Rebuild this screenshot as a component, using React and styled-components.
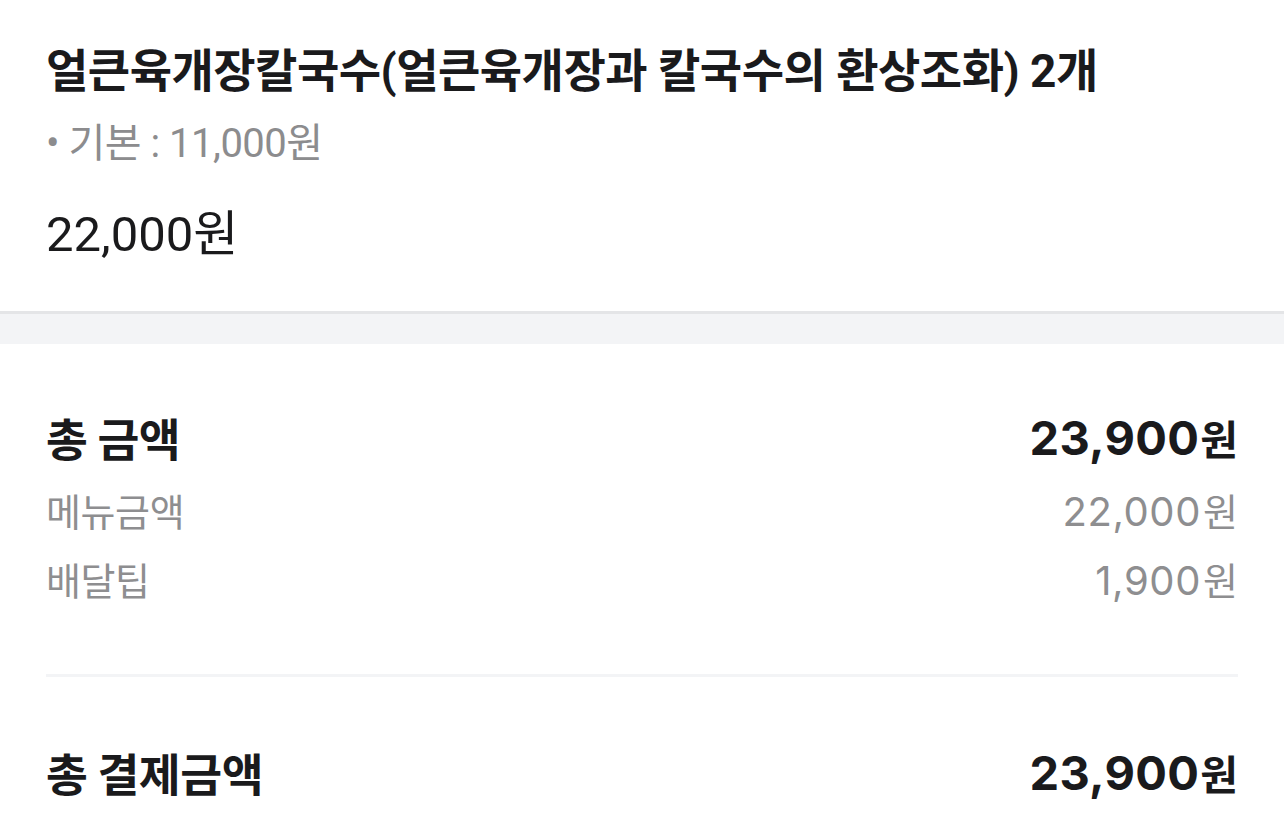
import React from "react";
import styled, { createGlobalStyle } from "styled-components";

const Global = createGlobalStyle`
  html, body { margin: 0; padding: 0; background: #fff; }
  body { font-family: "Noto Sans CJK KR", "Noto Sans", sans-serif; color: #1a1a1c; }
`;

const Page = styled.div`
  width: 1284px;
  min-height: 831px;
  background: #fff;
  overflow: hidden;
`;

const MenuSection = styled.section`
  padding: 40px 46px 0;
  height: 311px;
  box-sizing: border-box;
  display: flex;
  flex-direction: column;
`;

const MenuTitle = styled.h1`
  margin: 0;
  font-family: Roboto, "Noto Sans CJK KR", sans-serif;
  font-weight: 700;
  font-size: 46px;
  line-height: 62px;
  letter-spacing: -0.5px;
  color: #1a1a1c;
  white-space: nowrap;
`;

const OptionLine = styled.div`
  margin-top: 17px;
  font-family: Roboto, "Noto Sans CJK KR", sans-serif;
  font-size: 40px;
  line-height: 50px;
  letter-spacing: -0.5px;
  color: #8c8c8e;
`;

const MenuPrice = styled.div`
  margin-top: 36px;
  font-family: Roboto, "Noto Sans CJK KR", sans-serif;
  font-size: 49px;
  line-height: 60px;
  color: #1a1a1c;
`;

const Gap = styled.div`
  height: 30px;
  background: #f3f4f6;
  border-top: 3px solid #e4e5e7;
`;

const Summary = styled.section`
  padding: 55px 46px 0;
  display: flex;
  flex-direction: column;
`;

const Row = styled.div`
  display: flex;
  justify-content: space-between;
  align-items: center;
  height: ${(p) => (p.$strong ? "76px" : "69px")};
  color: ${(p) => (p.$strong ? "#1a1a1c" : "#8e8e90")};
  font-weight: ${(p) => (p.$strong ? 700 : 400)};
`;

const Label = styled.span`
  font-family: "Noto Sans CJK KR", sans-serif;
  font-size: ${(p) => (p.$strong ? "45.5px" : "38px")};
  letter-spacing: ${(p) => (p.$strong ? "-0.4px" : "-0.4px")};
`;

const Amount = styled.span`
  font-family: Inter, "Noto Sans CJK KR", sans-serif;
  font-size: ${(p) => (p.$strong ? "47px" : "40px")};
  letter-spacing: ${(p) => (p.$strong ? "0.3px" : "0.6px")};
  display: inline-flex;
  align-items: baseline;
`;

const Unit = styled.span`
  font-family: "Noto Sans CJK KR", sans-serif;
  font-size: ${(p) => (p.$strong ? "41px" : "38px")};
  letter-spacing: 0;
  margin-left: ${(p) => (p.$strong ? "1px" : "2px")};
`;

const Divider = styled.hr`
  margin: 61px 0 0;
  border: 0;
  height: 3px;
  background: #f3f4f6;
`;

const FinalRow = styled(Row)`
  margin-top: 57px;
`;

function SummaryRow({ strong, label, value, as }) {
  const Comp = as || Row;
  return (
    <Comp $strong={strong}>
      <Label $strong={strong}>{label}</Label>
      <Amount $strong={strong}>
        {value}
        <Unit $strong={strong}>원</Unit>
      </Amount>
    </Comp>
  );
}

export default function App() {
  return (
    <Page>
      <Global />
      <MenuSection>
        <MenuTitle>얼큰육개장칼국수(얼큰육개장과 칼국수의 환상조화) 2개</MenuTitle>
        <OptionLine>• 기본 : 11,000원</OptionLine>
        <MenuPrice>22,000원</MenuPrice>
      </MenuSection>
      <Gap />
      <Summary>
        <SummaryRow strong label="총 금액" value="23,900" />
        <SummaryRow label="메뉴금액" value="22,000" />
        <SummaryRow label="배달팁" value="1,900" />
        <Divider />
        <SummaryRow strong as={FinalRow} label="총 결제금액" value="23,900" />
      </Summary>
    </Page>
  );
}
